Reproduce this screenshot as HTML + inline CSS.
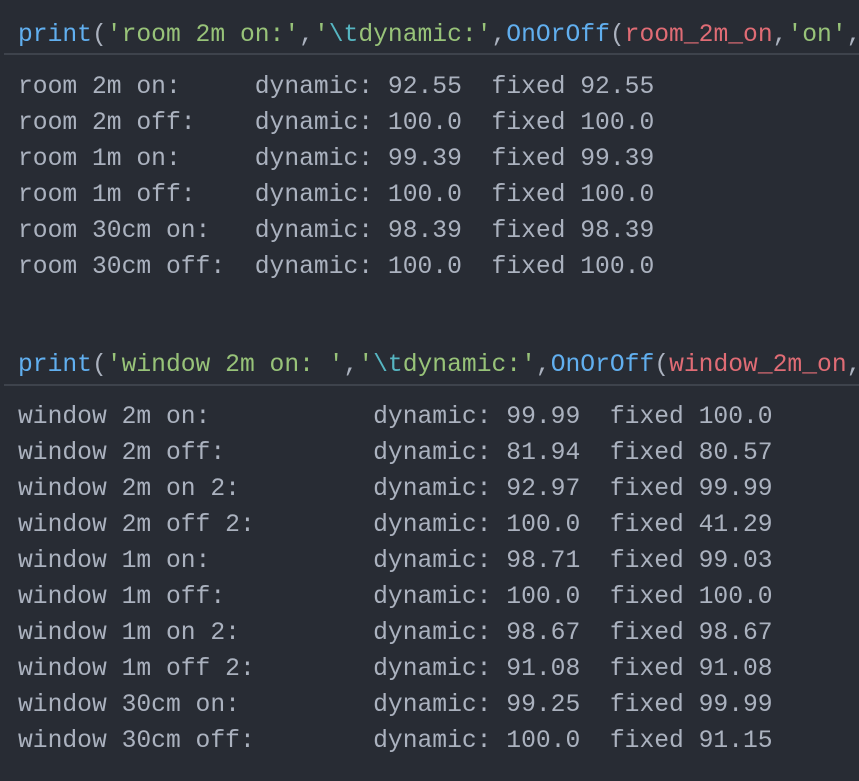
<!DOCTYPE html>
<html><head><style>
body{margin:0;background:#282c34;width:859px;height:781px;overflow:hidden;position:relative;font-family:"Liberation Mono","DejaVu Sans Mono",monospace;font-size:24.67px;color:#abb2bf}
.l{position:absolute;left:18px;white-space:pre;line-height:36px;height:36px;margin-top:1px}
.hr{position:absolute;left:4px;right:0;height:2px;background:#3e434c}
.b{color:#61afef}.g{color:#98c379}.c{color:#56b6c2}.r{color:#e06c75}
</style></head><body>
<div class="l" style="top:16px"><span class="b">print</span>(<span class="g">'room 2m on:'</span>,<span class="g">'</span><span class="c">\t</span><span class="g">dynamic:'</span>,<span class="b">OnOrOff</span>(<span class="r">room_2m_on</span>,<span class="g">'on'</span>,</div>
<div class="hr" style="top:53px"></div>
<div class="l" style="top:68px">room 2m on:     dynamic: 92.55  fixed 92.55</div>
<div class="l" style="top:104px">room 2m off:    dynamic: 100.0  fixed 100.0</div>
<div class="l" style="top:140px">room 1m on:     dynamic: 99.39  fixed 99.39</div>
<div class="l" style="top:176px">room 1m off:    dynamic: 100.0  fixed 100.0</div>
<div class="l" style="top:212px">room 30cm on:   dynamic: 98.39  fixed 98.39</div>
<div class="l" style="top:248px">room 30cm off:  dynamic: 100.0  fixed 100.0</div>
<div class="l" style="top:346px"><span class="b">print</span>(<span class="g">'window 2m on: '</span>,<span class="g">'</span><span class="c">\t</span><span class="g">dynamic:'</span>,<span class="b">OnOrOff</span>(<span class="r">window_2m_on</span>,</div>
<div class="hr" style="top:384px"></div>
<div class="l" style="top:398px">window 2m on:           dynamic: 99.99  fixed 100.0</div>
<div class="l" style="top:434px">window 2m off:          dynamic: 81.94  fixed 80.57</div>
<div class="l" style="top:470px">window 2m on 2:         dynamic: 92.97  fixed 99.99</div>
<div class="l" style="top:506px">window 2m off 2:        dynamic: 100.0  fixed 41.29</div>
<div class="l" style="top:542px">window 1m on:           dynamic: 98.71  fixed 99.03</div>
<div class="l" style="top:578px">window 1m off:          dynamic: 100.0  fixed 100.0</div>
<div class="l" style="top:614px">window 1m on 2:         dynamic: 98.67  fixed 98.67</div>
<div class="l" style="top:650px">window 1m off 2:        dynamic: 91.08  fixed 91.08</div>
<div class="l" style="top:686px">window 30cm on:         dynamic: 99.25  fixed 99.99</div>
<div class="l" style="top:722px">window 30cm off:        dynamic: 100.0  fixed 91.15</div>
</body></html>
